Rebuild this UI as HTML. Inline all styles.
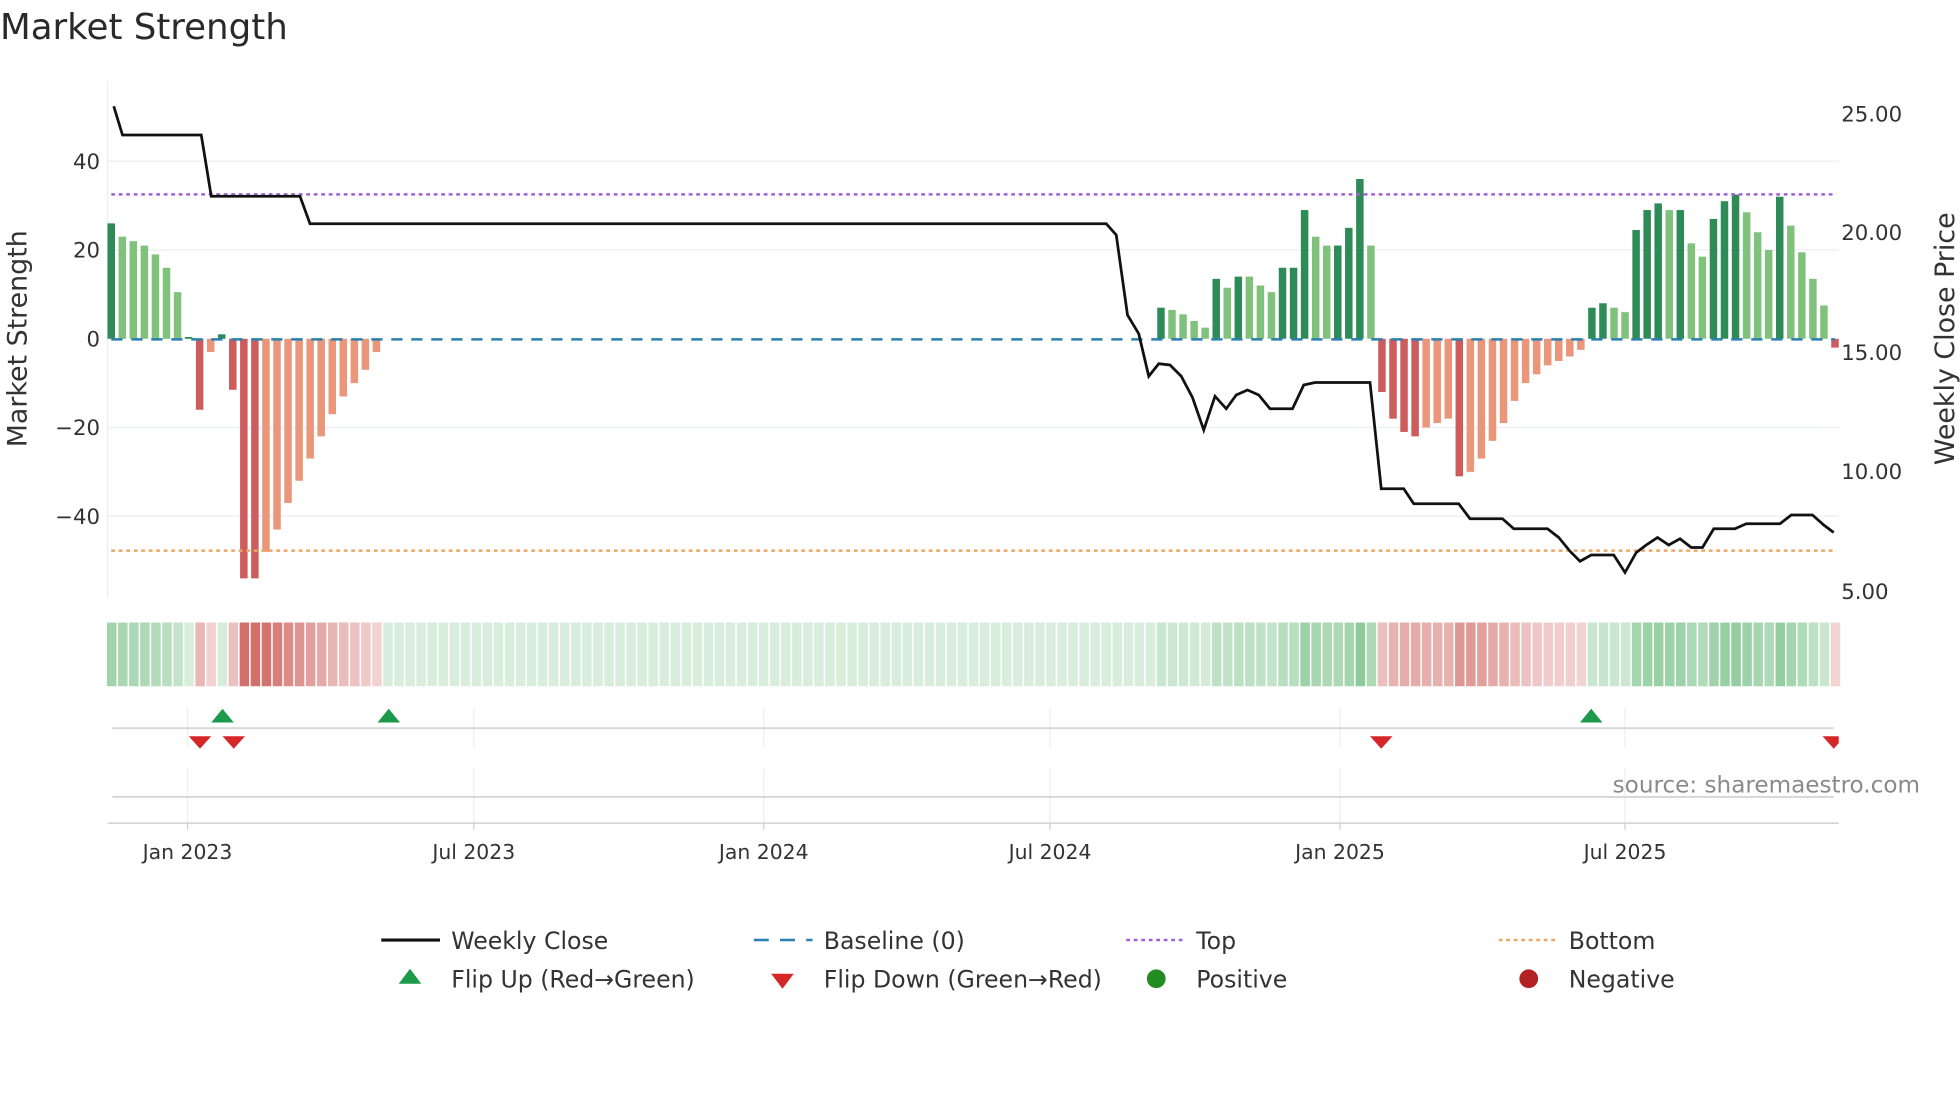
<!DOCTYPE html>
<html><head><meta charset="utf-8"><style>
html,body{margin:0;padding:0;background:#fff;width:1960px;height:1102px;overflow:hidden}
svg{display:block}
text{font-family:"DejaVu Sans","Liberation Sans",sans-serif;fill:#333}
</style></head><body>
<svg id="s" width="1960" height="1102" viewBox="0 0 1568 881.6" xmlns="http://www.w3.org/2000/svg">
<text x="0" y="31" font-size="28.5" style="fill:#2a2a2a">Market Strength</text>
<g stroke="#eceef2" stroke-width="1">
<line x1="86" y1="129" x2="1471" y2="129"/><line x1="86" y1="200" x2="1471" y2="200"/>
<line x1="86" y1="342" x2="1471" y2="342"/><line x1="86" y1="413" x2="1471" y2="413"/>
</g>
<line x1="86" y1="65" x2="86" y2="478" stroke="#eceef2"/>
<g font-size="17" text-anchor="end">
<text x="80" y="135">40</text><text x="80" y="206">20</text><text x="80" y="277">0</text>
<text x="80" y="348">−20</text><text x="80" y="419">−40</text>
</g>
<g font-size="17">
<text x="1473" y="97">25.00</text><text x="1473" y="192">20.00</text><text x="1473" y="288">15.00</text>
<text x="1473" y="383">10.00</text><text x="1473" y="479">5.00</text>
</g>
<text transform="translate(21,271) rotate(-90)" font-size="21.5" text-anchor="middle">Market Strength</text>
<text transform="translate(1563,271) rotate(-90)" font-size="21.5" text-anchor="middle">Weekly Close Price</text>
<g id="bars"></g>
<line x1="89" y1="271.5" x2="1468" y2="271.5" stroke="#2c7fae" stroke-width="2" stroke-dasharray="9,7"/>
<line x1="89" y1="155.5" x2="1468" y2="155.5" stroke="#a060d8" stroke-width="2" stroke-dasharray="3,3"/>
<line x1="89" y1="440.5" x2="1468" y2="440.5" stroke="#eda762" stroke-width="2" stroke-dasharray="3,3"/>
<polyline fill="none" stroke="#111" stroke-width="2.2" points="91,85 98,108 161,108 169,157 240,157 248,179 885,179 893,188 902,252 911,267 919,301 927,291 936,292 945,301 954,318 963,344 972,317 981,327 989,316 998,312 1007,316 1016,327 1034,327 1043,308 1052,306 1096,306 1105,391 1123,391 1131,403 1167,403 1176,415 1202,415 1211,423 1238,423 1247,430 1256,441 1264,449 1273,444 1291,444 1300,458 1309,442 1317,436 1326,430 1335,436 1344,431 1353,438 1362,438 1371,423 1388,423 1397,419 1424,419 1433,412 1450,412 1459,420 1467,426"/>
<g id="strip"></g>
<g stroke="#eceef2">
<line x1="150" y1="566" x2="150" y2="598"/><line x1="379" y1="566" x2="379" y2="598"/><line x1="611" y1="566" x2="611" y2="598"/><line x1="840" y1="566" x2="840" y2="598"/><line x1="1072" y1="566" x2="1072" y2="598"/><line x1="1300" y1="566" x2="1300" y2="598"/>
<line x1="150" y1="615" x2="150" y2="658"/><line x1="379" y1="615" x2="379" y2="658"/><line x1="611" y1="615" x2="611" y2="658"/><line x1="840" y1="615" x2="840" y2="658"/><line x1="1072" y1="615" x2="1072" y2="658"/><line x1="1300" y1="615" x2="1300" y2="658"/>
</g>
<line x1="90" y1="582.5" x2="1467" y2="582.5" stroke="#d4d6da" stroke-width="1.5"/>
<line x1="90" y1="637.5" x2="1467" y2="637.5" stroke="#d4d6da" stroke-width="1.5"/>
<line x1="86" y1="658.5" x2="1471" y2="658.5" stroke="#cfd1d5" stroke-width="1.2"/>
<g stroke="#cfd1d5"><line x1="150" y1="658" x2="150" y2="664"/><line x1="379" y1="658" x2="379" y2="664"/><line x1="611" y1="658" x2="611" y2="664"/><line x1="840" y1="658" x2="840" y2="664"/><line x1="1072" y1="658" x2="1072" y2="664"/><line x1="1300" y1="658" x2="1300" y2="664"/></g>
<g fill="#1a9a4a"><path d="M169,578 L178,567 L187,578Z"/><path d="M302,578 L311,567 L320,578Z"/><path d="M1264,578 L1273,567 L1282,578Z"/></g>
<g fill="#d62728"><path d="M151,589 L160,599 L169,589Z"/><path d="M178,589 L187,599 L196,589Z"/><path d="M1096,589 L1105,599 L1114,589Z"/><path d="M1458,589 L1467,599 L1476,589Z"/></g>
<rect x="1471" y="585" width="20" height="20" fill="#fff"/>
<text x="1536" y="634" font-size="18.5" style="fill:#8a8a8a" text-anchor="end">source: sharemaestro.com</text>
<g font-size="16.3" text-anchor="middle">
<text x="150" y="687">Jan 2023</text><text x="379" y="687">Jul 2023</text><text x="611" y="687">Jan 2024</text>
<text x="840" y="687">Jul 2024</text><text x="1072" y="687">Jan 2025</text><text x="1300" y="687">Jul 2025</text>
</g>
<g font-size="18.9">
<line x1="305" y1="752" x2="352" y2="752" stroke="#111" stroke-width="2.5"/><text x="361" y="759">Weekly Close</text>
<line x1="603" y1="752" x2="650" y2="752" stroke="#2c7fae" stroke-width="2" stroke-dasharray="12,9"/><text x="659" y="759">Baseline (0)</text>
<line x1="901" y1="752" x2="948" y2="752" stroke="#a060d8" stroke-width="2" stroke-dasharray="3,3"/><text x="957" y="759">Top</text>
<line x1="1199" y1="752" x2="1246" y2="752" stroke="#eda762" stroke-width="2" stroke-dasharray="3,3"/><text x="1255" y="759">Bottom</text>
<path d="M319,787 L328,775 L337,787Z" fill="#1a9a4a"/><text x="361" y="790">Flip Up (Red→Green)</text>
<path d="M617,779 L626,791 L635,779Z" fill="#d62728"/><text x="659" y="790">Flip Down (Green→Red)</text>
<circle cx="925" cy="783" r="7.5" fill="#228b22"/><text x="957" y="790">Positive</text>
<circle cx="1223" cy="783" r="7.5" fill="#b22222"/><text x="1255" y="790">Negative</text>
</g>
</svg>
<script>
var v=[[26,1],[23,0],[22,0],[21,0],[19,0],[16,0],[10.5,0],[0.4,1],[-16,1],[-3,0],[1,1],[-11.5,1],[-54,1],[-54,1],[-48,0],[-43,0],[-37,0],[-32,0],[-27,0],[-22,0],[-17,0],[-13,0],[-10,0],[-7,0],[-3,0]];
while(v.length<95)v.push([0,0]);
v=v.concat([[7,1],[6.5,0],[5.5,0],[4,0],[2.5,0],[13.5,1],[11.5,0],[14,1],[14,0],[12,0],[10.5,0],[16,1],[16,1],[29,1],[23,0],[21,0],[21,1],[25,1],[36,1],[21,0],
[-12,1],[-18,1],[-21,1],[-22,1],[-20,0],[-19,0],[-18,0],[-31,1],[-30,0],[-27,0],[-23,0],[-19,0],[-14,0],[-10,0],[-8,0],[-6,0],[-5,0],[-4,0],[-2.5,0],
[7,1],[8,1],[7,0],[6,0],[24.5,1],[29,1],[30.5,1],[29,0],[29,1],[21.5,0],[18.5,0],[27,1],[31,1],[32.5,1],[28.5,0],[24,0],[20,0],[32,1],[25.5,0],[19.5,0],[13.5,0],[7.5,0],[-2,1]]);
var n=v.length,step=(1468-89)/(n-1),ns="http://www.w3.org/2000/svg";
var B=document.getElementById('bars'),S=document.getElementById('strip');
function r(g,x,y,w,h,f){var e=document.createElementNS(ns,'rect');e.setAttribute('x',x);e.setAttribute('y',y);e.setAttribute('width',w);e.setAttribute('height',h);e.setAttribute('fill',f);g.appendChild(e);}
for(var i=0;i<n;i++){var x=89+i*step,val=v[i][0],d=v[i][1];
 if(val!==0){var h=Math.abs(val)*3.55,y=val>0?271-h:271;
  var c=val>0?(d?'#2e8b57':'#80c27c'):(d?'#cd5c5c':'#e9967a');r(B,x-3,y,6,h,c);}
 var a=0.22+0.6*Math.min(Math.abs(val)/50,1);
 var col=val<0?'rgba(200,80,75,'+a+')':'rgba(80,175,100,'+a+')';
 r(S,x-3.4,498,7.6,51,col);}
</script>
</body></html>
